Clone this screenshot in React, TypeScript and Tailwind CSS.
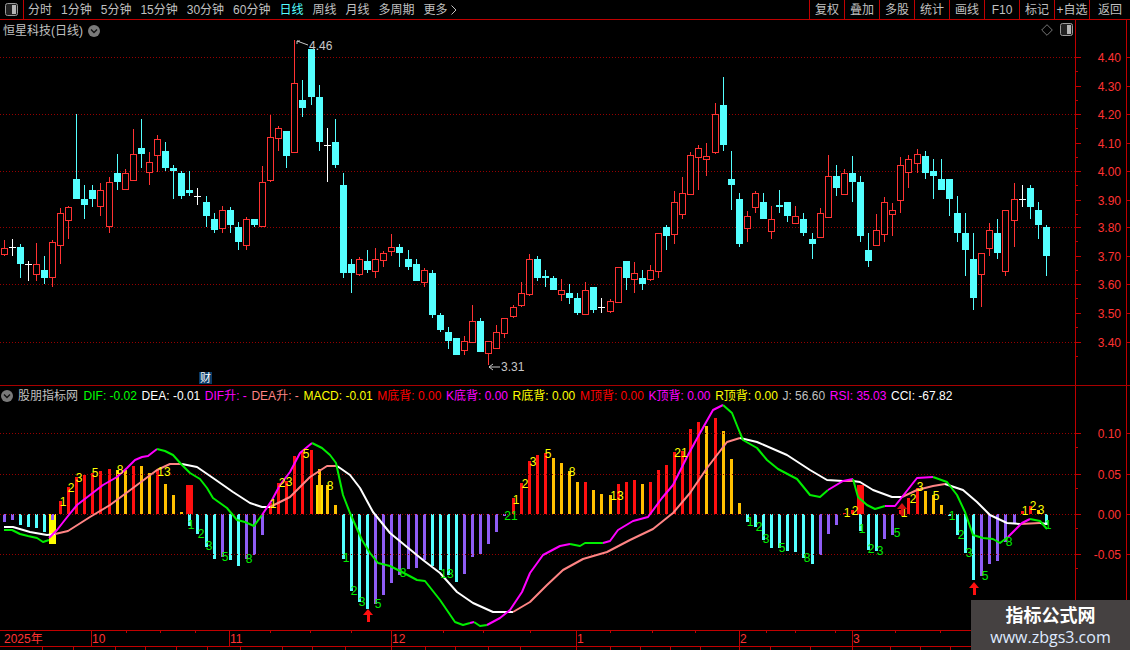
import React from 'react';

// [type, bodyTop, bodyBottom, wickTop, wickBottom] in page pixels
type Candle = [string, number, number, number, number];

const candles: Candle[] = [
  ['r', 248, 254, 240, 256], ['w', 247, 247, 239, 256], ['c', 247, 264, 244, 278], ['w', 264, 264, 261, 281], ['r', 264, 274, 243, 281],
  ['c', 270, 278, 256, 284], ['r', 242, 277, 240, 287], ['r', 213, 245, 208, 264], ['r', 207, 220, 206, 239], ['c', 179, 199, 114, 199],
  ['c', 199, 205, 185, 219], ['c', 190, 199, 185, 207], ['r', 190, 206, 183, 216], ['r', 182, 226, 177, 233], ['c', 173, 182, 154, 190],
  ['r', 173, 189, 169, 190], ['r', 154, 180, 129, 180], ['c', 148, 154, 119, 168], ['r', 162, 172, 152, 185], ['r', 139, 155, 135, 172],
  ['c', 151, 168, 142, 171], ['c', 168, 171, 165, 199], ['c', 173, 196, 171, 199], ['c', 190, 193, 171, 196], ['w', 196, 196, 188, 205],
  ['c', 202, 216, 196, 227], ['c', 219, 230, 213, 233], ['r', 210, 228, 206, 233], ['c', 210, 225, 207, 233], ['c', 227, 242, 222, 250],
  ['r', 219, 245, 217, 250], ['c', 219, 225, 219, 227], ['r', 182, 226, 166, 227], ['r', 137, 180, 115, 182], ['r', 128, 138, 126, 151],
  ['c', 131, 156, 131, 168], ['r', 83, 152, 40, 152], ['c', 100, 108, 80, 117], ['c', 49, 97, 49, 105], ['c', 97, 142, 85, 151],
  ['w', 145, 145, 128, 182], ['c', 142, 165, 119, 168], ['c', 185, 273, 173, 278], ['c', 264, 273, 259, 293], ['r', 259, 274, 257, 276],
  ['c', 261, 270, 250, 273], ['r', 259, 271, 248, 278], ['r', 253, 260, 251, 267], ['r', 247, 251, 234, 256], ['c', 247, 253, 244, 267],
  ['c', 259, 267, 250, 270], ['c', 264, 281, 259, 281], ['r', 270, 282, 268, 287], ['c', 273, 315, 270, 318], ['c', 315, 330, 313, 332],
  ['c', 332, 341, 327, 349], ['c', 338, 355, 338, 355], ['r', 341, 350, 336, 355], ['r', 321, 342, 305, 342], ['c', 321, 352, 318, 352],
  ['r', 341, 353, 341, 365], ['r', 332, 348, 325, 348], ['r', 318, 333, 318, 338], ['r', 307, 316, 305, 318], ['r', 293, 305, 282, 307],
  ['r', 259, 294, 254, 296], ['c', 259, 278, 256, 281], ['c', 276, 278, 270, 287], ['c', 278, 290, 276, 290], ['r', 290, 294, 279, 301],
  ['c', 293, 298, 284, 304], ['c', 298, 313, 293, 315], ['r', 290, 314, 282, 314], ['c', 287, 310, 287, 313], ['w', 307, 307, 298, 313],
  ['r', 301, 311, 299, 313], ['r', 267, 302, 267, 302], ['c', 261, 278, 261, 290], ['r', 273, 279, 262, 293], ['c', 278, 284, 270, 290],
  ['r', 270, 279, 265, 281], ['r', 233, 271, 233, 278], ['c', 227, 236, 225, 250], ['r', 202, 234, 191, 244], ['r', 193, 214, 177, 219],
  ['r', 155, 194, 152, 194], ['r', 148, 157, 145, 190], ['r', 156, 159, 143, 176], ['r', 114, 152, 103, 154], ['c', 105, 145, 77, 151],
  ['c', 179, 185, 151, 210], ['c', 199, 244, 193, 247], ['r', 216, 228, 211, 242], ['r', 193, 207, 191, 213], ['c', 202, 219, 193, 219],
  ['r', 219, 231, 206, 239], ['c', 205, 207, 190, 213], ['c', 202, 216, 202, 222], ['r', 216, 223, 206, 223], ['c', 219, 233, 213, 236],
  ['c', 239, 244, 233, 259], ['r', 213, 237, 208, 237], ['r', 176, 217, 155, 217], ['c', 176, 188, 165, 196], ['r', 173, 194, 169, 194],
  ['c', 173, 182, 156, 202], ['c', 182, 236, 176, 242], ['c', 250, 261, 233, 267], ['r', 230, 245, 214, 245], ['r', 202, 234, 197, 242],
  ['r', 210, 214, 203, 236], ['r', 165, 200, 157, 213], ['r', 159, 172, 155, 188], ['r', 154, 163, 149, 173], ['c', 156, 173, 151, 179],
  ['c', 171, 176, 159, 199], ['c', 179, 190, 159, 190], ['c', 179, 199, 179, 216], ['c', 213, 233, 196, 242], ['c', 233, 250, 213, 276],
  ['c', 259, 298, 233, 310], ['r', 253, 274, 253, 307], ['r', 230, 248, 223, 256], ['c', 233, 253, 219, 259], ['r', 210, 271, 210, 276],
  ['r', 199, 220, 183, 247], ['w', 199, 199, 185, 207], ['c', 188, 207, 185, 219], ['c', 210, 225, 202, 239], ['c', 227, 256, 225, 276],
];

const macd =
  'p-8 p-6 c-11 c-13 c-14 c-18 p-6 r13 r27 r37 r39 r41 r43 r45 o44 o44 r48 o48 o41 r44 o30 o19 o2 c-12 c-20 c-33 c-45 p-43 c-46 c-52 p-45 p-41 p-21 r11 r31 r33 r58 r62 r64 o45 o29 o9 c-45 c-77 c-88 c-95 p-90 p-81 p-69 p-61 p-55 p-54 p-46 c-52 c-56 c-61 c-68 p-60 p-43 p-40 p-30 p-18 p-2 r16 r31 r53 r59 r61 o56 o51 o43 o32 r32 o24 o20 o19 r30 r32 r34 o30 r32 r44 r49 r62 r63 r85 r92 o88 r96 o83 o55 o11 c-8 c-13 c-26 c-34 c-34 c-37 c-38 c-44 c-50 p-41 p-20 p-11 r1 r4 c-17 c-36 c-37 p-25 p-21 r4 r16 r26 o23 o19 o9 c-2 c-21 c-39 c-66 p-62 p-50 p-47 p-28 p-10 r3 r8 o4 c-11'.split(' ');

const barFill: Record<string, string> = {
  p: 'fill-[#8f5cf5]',
  c: 'fill-[#54ffff]',
  r: 'fill-[#ff1010]',
  o: 'fill-[#ffc000]',
};

// x pixel of bar i
const barX = (i: number) => Math.floor(4 + 8.08 * i);

const difLines: [string, string][] = [
  ['#00ee00', '4,530 12,530 20,534 28,536 37,538 43,542 49,540'],
  ['#ff00ff', '49,538 57,530 68,516 77,505 90,495 103,485 117,477 127,468 135,460 142,457 148,456 157,449'],
  ['#00ee00', '157,449 165,451 173,455 182,465 190,473 200,479 207,488 213,498 227,508 237,520 245,522 254,526 262,515'],
  ['#ff00ff', '262,515 272,500 280,485 290,472 300,453 312,443'],
  ['#00ee00', '312,443 322,448 330,455 336,463 343,495 350,513 362,540 370,553 378,563 390,566 402,572 417,580 425,581 440,600 455,622 463,625 470,623'],
  ['#ff00ff', '470,623 474,622'],
  ['#00ee00', '474,622 480,626 487,625'],
  ['#ff00ff', '487,625 500,618 510,610 522,592 530,573 543,555 560,546 570,544'],
  ['#00ee00', '570,544 580,546 585,543 603,543'],
  ['#ff00ff', '603,543 610,541 618,530 633,521 648,517 662,498 673,485 688,455 700,433 713,410 723,405'],
  ['#00ee00', '723,405 732,413 738,428 743,440 757,448 767,460 778,469 797,479 810,495 820,497 828,490'],
  ['#ff00ff', '828,490 843,481 853,479'],
  ['#00ee00', '853,479 858,497 867,505 875,509 885,506'],
  ['#ff00ff', '885,506 895,506 917,478 933,477'],
  ['#00ee00', '933,477 947,482 957,495 965,512 973,535 983,538 993,539 1000,543 1008,537'],
  ['#ff00ff', '1008,537 1022,523 1030,519'],
  ['#00ee00', '1030,519 1040,521 1047,529'],
];

const deaLines: [string, string][] = [
  ['#ffffff', '4,527 13,527 30,532 47,535 55,534'],
  ['#ff8484', '55,534 68,531 90,517 110,505 133,488 157,470 170,464 182,464'],
  ['#ffffff', '182,464 197,467 213,478 233,492 250,503 262,507 270,507'],
  ['#ff8484', '270,507 290,497 310,477 327,466 337,466'],
  ['#ffffff', '337,466 340,468 350,475 360,488 373,512 390,533 407,547 423,560 440,573 457,592 473,603 493,612 513,612'],
  ['#ff8484', '513,612 530,602 547,585 563,570 583,559 607,552 630,540 653,529 673,513 690,493 707,468 727,442 740,438'],
  ['#ffffff', '740,438 757,442 787,455 810,470 827,480 843,481'],
  ['#ff8484', '843,481 853,481'],
  ['#ffffff', '853,481 860,482 873,490 892,497 902,497'],
  ['#ff8484', '902,497 917,490 933,486 945,484'],
  ['#ffffff', '945,484 963,490 977,502 990,515 1007,523 1020,524'],
  ['#ff8484', '1020,524 1040,523'],
  ['#ffffff', '1040,523 1047,524'],
];

// [text, x, y]
const yellowMarks: [string, number, number][] = [
  ['1', 63, 501], ['2', 71, 487], ['3', 79, 477], ['5', 95, 472], ['8', 120, 469], ['13', 164, 471], ['1', 273, 503], ['2', 282, 482],
  ['3', 289, 481], ['5', 306, 453], ['8', 330, 485], ['1', 516, 499], ['2', 525, 483], ['3', 533, 461], ['5', 548, 453], ['8', 572, 471],
  ['13', 617, 495], ['21', 681, 452], ['1', 847, 512], ['2', 855, 510], ['1', 904, 512], ['2', 913, 498], ['3', 920, 486], ['5', 936, 495],
  ['1', 1025, 510], ['2', 1033, 505], ['3', 1041, 509],
];

const greenMarks: [string, number, number][] = [
  ['1', 191, 524], ['2', 201, 533], ['3', 209, 545], ['5', 225, 556], ['8', 249, 558], ['1', 346, 557], ['2', 354, 590], ['3', 362, 601],
  ['5', 378, 603], ['8', 403, 572], ['13', 447, 573], ['21', 511, 515], ['1', 750, 521], ['2', 759, 526], ['3', 766, 538], ['5', 782, 547],
  ['8', 807, 557], ['1', 862, 528], ['2', 871, 548], ['3', 880, 550], ['5', 897, 532], ['1', 952, 515], ['2', 961, 534], ['3', 969, 552],
  ['5', 985, 575], ['8', 1009, 541], ['1', 1048, 524],
];

const tabs = ['分时', '1分钟', '5分钟', '15分钟', '30分钟', '60分钟', '日线', '周线', '月线', '多周期'];
const tools = ['复权', '叠加', '多股', '统计', '画线', 'F10', '标记', '+自选', '返回'];

const legend: [string, string][] = [
  ['DIF: -0.02', 'text-[#00ff00]'],
  ['DEA: -0.01', 'text-white'],
  ['DIF升: -', 'text-[#ff00ff]'],
  ['DEA升: -', 'text-[#ff8484]'],
  ['MACD: -0.01', 'text-[#ffff00]'],
  ['M底背: 0.00', 'text-[#ff0000]'],
  ['K底背: 0.00', 'text-[#ff00ff]'],
  ['R底背: 0.00', 'text-[#ffff00]'],
  ['M顶背: 0.00', 'text-[#ff0000]'],
  ['K顶背: 0.00', 'text-[#ff00ff]'],
  ['R顶背: 0.00', 'text-[#ffff00]'],
  ['J: 56.60', 'text-[#c0c0c0]'],
  ['RSI: 35.03', 'text-[#ff00ff]'],
  ['CCI: -67.82', 'text-white'],
];

const priceTicks: [string, number][] = [
  ['4.40', 57], ['4.30', 86], ['4.20', 114], ['4.10', 143], ['4.00', 171], ['3.90', 200], ['3.80', 227], ['3.70', 256], ['3.60', 284], ['3.50', 313], ['3.40', 342],
];
const macdTicks: [string, number][] = [['0.10', 433], ['0.05', 474], ['0.00', 514], ['-0.05', 554]];
const months: [string, number][] = [['2025年', 4], ['10', 92], ['11', 230], ['12', 392], ['1', 577], ['2', 740], ['3', 853]];

function PanelIcon() {
  return (
    <svg width="13" height="13" viewBox="0 0 13 13">
      <rect x="0.5" y="0.5" width="12" height="12" rx="2" fill="#222" stroke="#9a9a9a" />
      <rect x="7" y="2" width="4" height="9" fill="#b5b5b5" />
    </svg>
  );
}

function Chevron() {
  return (
    <svg width="12" height="12" viewBox="0 0 12 12">
      <circle cx="6" cy="6" r="6" fill="#7a7a7a" />
      <path d="M3 4.5 L6 7.5 L9 4.5" fill="none" stroke="#111" strokeWidth="1.4" />
    </svg>
  );
}

function Dotted({ y }: { y: number }) {
  return <line x1="0" x2="1075" y1={y + 0.5} y2={y + 0.5} stroke="#960000" strokeDasharray="1 2" shapeRendering="crispEdges" />;
}

function PriceChart() {
  return (
    <svg width="1075" height="365" viewBox="0 20 1075 365" className="block">
      {[57, 114, 171, 227, 284, 342].map((y) => (
        <Dotted key={y} y={y} />
      ))}
      {candles.map(([t, top, bot, wt, wb], i) => {
        const x = barX(i);
        if (t === 'c') {
          return (
            <g key={i} className="fill-[#54ffff]" shapeRendering="crispEdges">
              <rect x={x} y={wt} width="1" height={wb - wt} />
              <rect x={x - 3} y={top} width="7" height={bot - top} />
            </g>
          );
        }
        if (t === 'w') {
          return (
            <g key={i} className="fill-white" shapeRendering="crispEdges">
              <rect x={x} y={wt} width="1" height={wb - wt} />
              <rect x={x - 3} y={top} width="7" height="1" />
            </g>
          );
        }
        return (
          <g key={i} shapeRendering="crispEdges">
            {wt < top && <rect x={x} y={wt} width="1" height={top - wt} className="fill-[#ff3232]" />}
            {wb > bot && <rect x={x} y={bot} width="1" height={wb - bot} className="fill-[#ff3232]" />}
            <rect x={x - 2.5} y={top + 0.5} width="6" height={bot - top} fill="#000" stroke="#ff3232" strokeWidth="1" />
          </g>
        );
      })}
      {/* high / low flags */}
      <path d="M297 44 L297 41 L300 41 M297 41 L308 45" fill="none" stroke="#c8c8c8" />
      <text x="309" y="50" className="fill-[#c8c8c8] text-[12px]">4.46</text>
      <path d="M500 367 L489 367 M493 364 L489 367 L493 370" fill="none" stroke="#c8c8c8" />
      <text x="501" y="371" className="fill-[#c8c8c8] text-[12px]">3.31</text>
    </svg>
  );
}

function Mark({ t, x, y, green }: { t: string; x: number; y: number; green?: boolean }) {
  return (
    <text x={x} y={y + 4.5} textAnchor="middle" className={green ? 'fill-[#00ee00] text-[12px]' : 'fill-[#ffff00] text-[12px]'}>
      {t}
    </text>
  );
}

function Arrow({ x, y, dim }: { x: number; y: number; dim?: boolean }) {
  return (
    <g className={dim ? 'fill-[#d01010]' : 'fill-[#ff1010]'}>
      <polygon points={`${x},${y} ${x - 5},${y + 6} ${x + 5},${y + 6}`} />
      <rect x={x - 1} y={y + 6} width="3" height="7" />
    </g>
  );
}

function MacdChart() {
  const zero = 514;
  return (
    <svg width="1075" height="244" viewBox="0 386 1075 244" className="block">
      {/* wide marker bars */}
      <g shapeRendering="crispEdges">
        <rect x={barX(6) - 3} y={zero} width="7" height="30" className="fill-[#ffff00]" />
        <rect x={barX(23) - 3} y={zero - 29} width="7" height="29" className="fill-[#ff1010]" />
        <rect x={barX(39) - 3} y={zero - 29} width="7" height="29" className="fill-[#ffe000]" />
        <rect x={barX(106) - 3} y={zero - 29} width="7" height="29" className="fill-[#ff1010]" />
        {macd.map((m, i) => {
          const v = parseInt(m.slice(1), 10);
          return (
            <rect
              key={i}
              x={barX(i) - 1}
              y={v > 0 ? zero - v : zero}
              width="3"
              height={Math.abs(v)}
              className={barFill[m[0]]}
            />
          );
        })}
      </g>
      {[433, 474, 514, 554].map((y) => (
        <Dotted key={y} y={y} />
      ))}
      {deaLines.map(([c, p], i) => (
        <polyline key={i} points={p} fill="none" stroke={c} strokeWidth="2" strokeLinejoin="round" />
      ))}
      {difLines.map(([c, p], i) => (
        <polyline key={i} points={p} fill="none" stroke={c} strokeWidth="2" strokeLinejoin="round" />
      ))}
      {yellowMarks.map(([t, x, y], i) => (
        <Mark key={i} t={t} x={x} y={y} />
      ))}
      {greenMarks.map(([t, x, y], i) => (
        <Mark key={i} t={t} x={x} y={y} green />
      ))}
      <Arrow x={368} y={609} />
      <Arrow x={974} y={582} />
      <Arrow x={902} y={503} dim />
    </svg>
  );
}

function Axis({ top, height, ticks }: { top: number; height: number; ticks: [string, number][] }) {
  return (
    <svg width="54" height={height} viewBox={`1076 ${top} 54 ${height}`} className="block">
      <rect x="1126" y={top} width="1" height={height} className="fill-[#c00000]" />
      {ticks.map(([label, y]) => (
        <g key={label}>
          <rect x="1076" y={y} width="5" height="1" className="fill-[#c00000]" />
          <rect x="1076" y={y + 14} width="2" height="1" className="fill-[#c00000]" />
          <rect x="1127" y={y} width="3" height="1" className="fill-[#c00000]" />
          <text x="1121" y={y + 5} textAnchor="end" className="fill-[#ff3232] text-[12px]">
            {label}
          </text>
        </g>
      ))}
    </svg>
  );
}

export default function App() {
  return (
    <div className="relative flex h-[650px] w-[1130px] flex-col overflow-hidden bg-black font-['Liberation_Sans','Noto_Sans_CJK_SC',sans-serif] text-[12px] text-[#c0c0c0]">
      {/* top toolbar */}
      <div className="flex h-[20px] shrink-0 items-center border-b border-[#c00000]">
        <div className="flex h-full w-[24px] items-center justify-center border-r border-[#c00000]">
          <PanelIcon />
        </div>
        <div className="ml-[4px] flex items-center gap-[9px]">
          {tabs.map((t) => (
            <span key={t} className={t === '日线' ? 'text-[#54ffff]' : ''}>
              {t}
            </span>
          ))}
          <span className="flex items-center gap-[3px]">
            更多
            <svg width="6" height="10" viewBox="0 0 6 10">
              <path d="M0.5 0.5 L5 5 L0.5 9.5" fill="none" stroke="#c0c0c0" />
            </svg>
          </span>
        </div>
        <div className="ml-auto flex h-full">
          {tools.map((t, i) => (
            <div key={t} className={`flex h-full items-center justify-center border-l border-[#c00000] ${i === tools.length - 1 ? 'w-[41px]' : 'w-[35px]'}`}>
              {t}
            </div>
          ))}
        </div>
      </div>

      {/* price panel */}
      <div className="flex h-[366px] shrink-0 border-b border-[#a80000]">
        <div className="relative w-[1075px] shrink-0">
          <PriceChart />
          <div className="absolute left-[3px] top-[2px] flex items-center gap-[5px]">
            恒星科技(日线)
            <Chevron />
          </div>
          <div className="absolute right-[2px] top-[3px] flex items-center gap-[7px]">
            <svg width="12" height="12" viewBox="0 0 12 12">
              <path d="M6 0.7 L11.3 6 L6 11.3 L0.7 6 Z" fill="none" stroke="#777" />
            </svg>
            <PanelIcon />
          </div>
        </div>
        <div className="border-l border-[#c00000]">
          <Axis top={20} height={365} ticks={priceTicks} />
        </div>
      </div>

      {/* indicator panel */}
      <div className="flex h-[244px] shrink-0">
        <div className="relative w-[1075px] shrink-0">
          <MacdChart />
          <div className="absolute left-[1px] top-[1px] flex items-center gap-[4.6px] whitespace-nowrap">
            <span className="mr-[1px] flex items-center gap-[5px]">
              <Chevron />
              股朋指标网
            </span>
            {legend.map(([t, c]) => (
              <span key={t} className={c}>
                {t}
              </span>
            ))}
          </div>
          <div className="absolute left-[199px] -top-[14px] flex h-[12px] w-[13px] items-center justify-center bg-[#0b3a66] text-[11px] text-white">
            财
          </div>
        </div>
        <div className="border-l border-[#c00000]">
          <Axis top={386} height={244} ticks={macdTicks} />
        </div>
      </div>

      {/* time axis */}
      <svg width="1130" height="20" viewBox="0 630 1130 20" className="block shrink-0">
        <rect x="0" y="630" width="1130" height="1" className="fill-[#c00000]" />
        <rect x="0" y="646" width="1130" height="1" className="fill-[#c00000]" />
        {[126, 160, 195, 270, 310, 351, 443, 483, 530, 610, 652, 695, 766, 795, 835, 895, 940].map((x) => (
          <rect key={x} x={x} y="630" width="1" height="3" className="fill-[#c00000]" />
        ))}
        {[42, 73, 115, 145, 176, 207, 240, 282, 312, 345, 391, 425, 455, 488, 520, 576, 610, 640, 670, 700, 739, 770, 810, 852, 890, 920, 950].map((x) => (
          <rect key={x} x={x} y="646" width="1" height="4" className="fill-[#c00000]" />
        ))}
        {months.map(([label, x]) => (
          <g key={label}>
            {x > 10 && <rect x={x - 1} y="630" width="1" height="16" className="fill-[#c00000]" />}
            <text x={x} y="643" className="fill-[#ff3232] text-[12px]">
              {label}
            </text>
          </g>
        ))}
      </svg>

      {/* watermark */}
      <div className="absolute bottom-0 right-0 flex h-[50px] w-[159px] flex-col items-center justify-center bg-[#454141]">
        <span className="text-[18px] font-bold leading-[24px] text-white">指标公式网</span>
        <span className="font-['Open_Sans',sans-serif] text-[16px] leading-[18px] text-[#dfeaff]">www.zbgs3.com</span>
      </div>
    </div>
  );
}
